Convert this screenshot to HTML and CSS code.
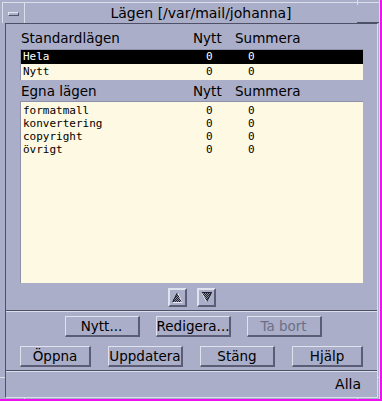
FILE: index.html
```html
<!DOCTYPE html>
<html lang="sv">

<head>
  <meta name="viewport" content="width=device-width, initial-scale=1">
  <meta charset="UTF-8">
  <link rel="stylesheet" href="styles.css">
</head>

<body>
  <div class="window">
    <div class="titlebar">
      <div class="menu-btn"><span class="menu-bar"></span></div>
      <div class="title">Lägen [/var/mail/johanna]</div>
    </div>

    <div class="client">
      <div class="lists">
        <div class="list-head">
          <span>Standardlägen</span>
          <span>Nytt</span>
          <span>Summera</span>
        </div>
        <div class="list list-std">
          <div class="row selected"><span>Hela</span><span>0</span><span>0</span></div>
          <div class="row"><span>Nytt</span><span>0</span><span>0</span></div>
        </div>

        <div class="list-head">
          <span>Egna lägen</span>
          <span>Nytt</span>
          <span>Summera</span>
        </div>
        <div class="list list-own">
          <div class="row"><span>formatmall</span><span>0</span><span>0</span></div>
          <div class="row"><span>konvertering</span><span>0</span><span>0</span></div>
          <div class="row"><span>copyright</span><span>0</span><span>0</span></div>
          <div class="row"><span>övrigt</span><span>0</span><span>0</span></div>
        </div>
      </div>

      <div class="arrows">
        <button class="arrow-btn">
          <svg width="11" height="11" viewBox="0 0 11 11">
            <defs>
              <pattern id="dots" width="2" height="2" patternUnits="userSpaceOnUse">
                <rect width="2" height="2" fill="#8d90a8" />
                <rect width="1" height="1" fill="#1d1e28" />
                <rect x="1" y="1" width="1" height="1" fill="#1d1e28" />
              </pattern>
            </defs>
            <polygon points="0,10.5 5.5,0 11,10.5" fill="url(#dots)" />
            <polyline points="0.5,10.5 5.5,0.5" stroke="#1d1e28" fill="none" />
            <polyline points="5.5,0.5 10.5,10.5 0.5,10.5" stroke="#e6e8f2" fill="none" />
          </svg>
        </button>
        <button class="arrow-btn">
          <svg width="11" height="11" viewBox="0 0 11 11">
            <polygon points="0,0.5 11,0.5 5.5,10" fill="url(#dots)" />
            <polyline points="0.5,0.5 10.5,0.5 5.5,10" stroke="#1d1e28" fill="none" />
            <polyline points="0.5,0.5 5.5,10" stroke="#e6e8f2" fill="none" />
          </svg>
        </button>
      </div>

      <div class="sep"></div>

      <div class="btn-row row-edit">
        <button class="btn">Nytt...</button>
        <button class="btn">Redigera...</button>
        <button class="btn disabled">Ta bort</button>
      </div>

      <div class="btn-row row-main">
        <button class="btn btn-narrow">Öppna</button>
        <button class="btn">Uppdatera</button>
        <button class="btn">Stäng</button>
        <button class="btn btn-narrow">Hjälp</button>
      </div>

      <div class="sep"></div>

      <div class="status">Alla</div>
    </div>

    <span class="tick tick-tr-v"></span>
    <span class="tick tick-tr-h"></span>
    <span class="tick tick-bl-v"></span>
    <span class="tick tick-bl-h"></span>
    <span class="tick tick-br-v"></span>
    <span class="tick tick-br-h"></span>
  </div>
</body>

</html>
```

FILE: styles.css
```css
body {
  margin: 0;
  padding: 0;
  background-color: #ee10ee;
  font-family: "DejaVu Sans", sans-serif;
  font-size: 13.5px;
  color: #000000;
}

.window {
  position: relative;
  width: 380px;
  height: 399px;
  box-sizing: border-box;
  background-color: #aaaec9;
  border-right: 1px solid #dcdeec;
  display: flex;
  flex-direction: column;
}

/* title bar */

.titlebar {
  display: flex;
  height: 20px;
  margin: 2px 0 0 2px;
  border-top: 1px solid #dcdeec;
  border-left: 1px solid #dcdeec;
}

.menu-btn {
  width: 21px;
  border-right: 1px solid #dcdeec;
  display: flex;
  align-items: center;
  justify-content: center;
}

.menu-bar {
  display: block;
  width: 9px;
  height: 2px;
  border-top: 1px solid #e6e8f2;
  border-left: 1px solid #e6e8f2;
  border-bottom: 1px solid #50536a;
  border-right: 1px solid #50536a;
  margin-top: 1px;
}

.title {
  flex: 1;
  text-align: center;
  font-size: 14px;
  line-height: 20px;
  padding-right: 2px;
}

/* client area */

.client {
  flex: 1;
  margin: 0 1px 1px 5px;
  border-top: 1px solid #4d5066;
  border-left: 1px solid #4d5066;
  border-right: 1px solid #dcdeec;
  border-bottom: 1px solid #dcdeec;
  display: flex;
  flex-direction: column;
}

.lists {
  padding: 0 14px;
}

.list-head {
  display: grid;
  grid-template-columns: 172px 42px 1fr;
  line-height: 16px;
  padding-left: 1px;
  margin-top: 3px;
}

.list-head:first-child {
  margin-top: 6px;
}

.list {
  margin-top: 3px;
  background-color: #fdf9e3;
  border-top: 1px solid #8e91aa;
  border-left: 1px solid #8e91aa;
  box-sizing: border-box;
  font-family: "DejaVu Sans Mono", monospace;
  font-size: 11px;
}

.list-std {
  height: 31px;
}

.list-own {
  height: 182px;
  margin-top: 2px;
  padding-top: 2px;
}

.row {
  display: grid;
  grid-template-columns: 183px 42px 1fr;
  line-height: 13px;
  padding-left: 2px;
}

.list-std .row {
  line-height: 14px;
}

.list-std .row + .row {
  margin-top: 1px;
}

.row.selected {
  background-color: #000000;
  color: #ffffff;
}

/* arrows */

.arrows {
  display: flex;
  justify-content: center;
  gap: 10px;
  margin-top: 5px;
  padding-left: 1px;
}

.arrow-btn {
  width: 19px;
  height: 19px;
  padding: 0;
  background-color: #aaaec9;
  border-top: 2px solid #e0e2ee;
  border-left: 2px solid #e0e2ee;
  border-bottom: 2px solid #5a5d74;
  border-right: 2px solid #5a5d74;
  display: flex;
  align-items: center;
  justify-content: center;
}

.arrow-btn svg {
  display: block;
}

.sep {
  margin-top: 3px;
  height: 0;
  border-top: 1px solid #4d5066;
  border-bottom: 1px solid #dcdeec;
}

/* buttons */

.btn-row {
  display: flex;
  padding: 0 14px;
}

.row-edit {
  justify-content: center;
  gap: 16px;
  margin-top: 4px;
  padding-left: 17px;
}

.row-main {
  justify-content: space-between;
  margin-top: 9px;
}

.btn {
  width: 75px;
  height: 21px;
  padding: 0;
  font-family: "DejaVu Sans", sans-serif;
  font-size: 13.5px;
  line-height: 17px;
  color: #000000;
  background-color: #aaaec9;
  border-top: 1px solid #e0e2ee;
  border-left: 1px solid #e0e2ee;
  border-bottom: 2px solid #5a5d74;
  border-right: 2px solid #5a5d74;
}

.btn-narrow {
  width: 71px;
}

.btn.disabled {
  color: #6c6f86;
}

.status {
  margin-top: 4px;
  line-height: 16px;
  text-align: right;
  padding-right: 16px;
  font-size: 14px;
}

/* frame corner marks */

.tick {
  position: absolute;
  background-color: #dcdeec;
}

.tick-tr-v {
  left: 357px;
  top: 0;
  width: 1px;
  height: 5px;
}

.tick-tr-h {
  left: 357px;
  top: 22px;
  width: 22px;
  height: 1px;
  background-color: #4d5066;
}

.tick-bl-v {
  left: 24px;
  bottom: 0;
  width: 1px;
  height: 2px;
}

.tick-bl-h {
  left: 0;
  top: 377px;
  width: 5px;
  height: 1px;
}

.tick-br-v {
  left: 357px;
  bottom: 0;
  width: 1px;
  height: 2px;
}

.tick-br-h {
  right: 0;
  top: 377px;
  width: 2px;
  height: 1px;
}
```
